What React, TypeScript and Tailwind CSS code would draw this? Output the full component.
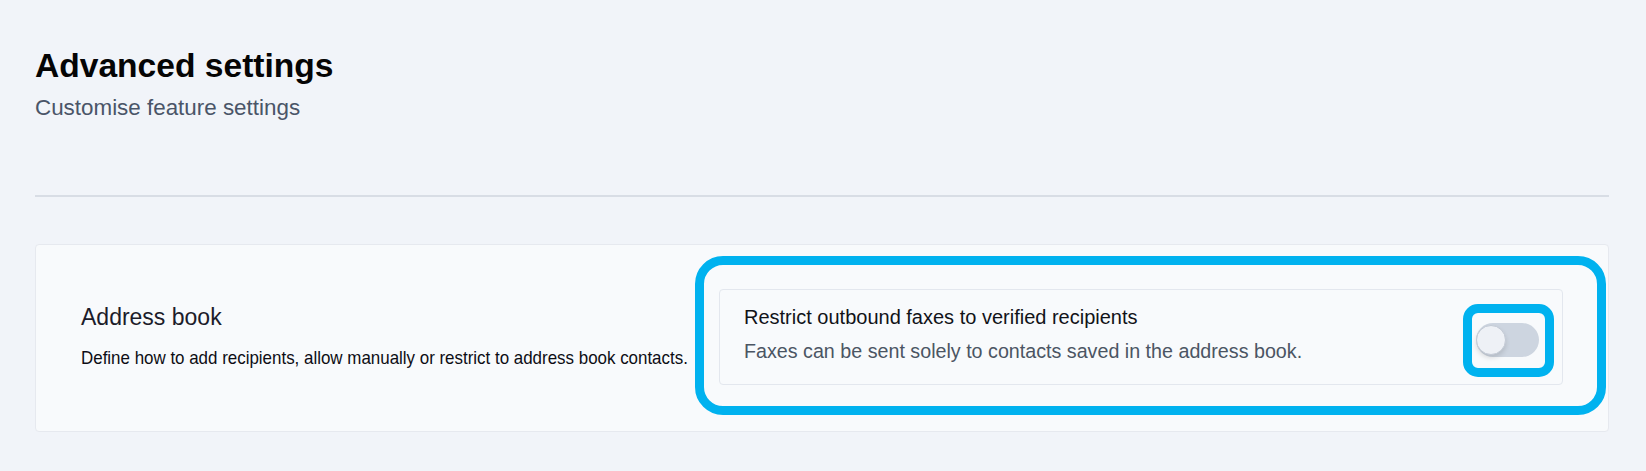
import React from "react";

export default function App() {
  return (
    <div
      className="min-h-[471px] w-full bg-[#f1f4f9] pl-[35px] pr-[37px] pt-[46px]"
      style={{ fontFamily: '"Liberation Sans", Arial, sans-serif' }}
    >
      <h1 className="text-[33.6px] font-bold leading-[40px] text-[#050505]">Advanced settings</h1>
      <p className="mt-[8px] text-[22.4px] leading-[28px] text-[#4a5568]">Customise feature settings</p>

      <div className="mt-[73px] h-[2px] w-full bg-[#d8dde5]" />

      <div className="mt-[47px] flex h-[188px] items-start justify-between rounded-[4px] border border-[#e6e9ef] bg-[#f8fafc] pr-[2px]">
        <div className="mt-[59px] min-w-0 flex-1 pl-[45px]">
          <div className="text-[23px] leading-[26px] text-[#1c1c2a]">Address book</div>
          <div className="mt-[17px] origin-left scale-x-[0.915] whitespace-nowrap text-[18.5px] leading-[22px] text-[#0d0d14]">
            Define how to add recipients, allow manually or restrict to address book contacts.
          </div>
        </div>

        <div className="mt-[11px] w-[911px] shrink-0 rounded-[28px] border-[9px] border-[#00b2ef] pb-[21px] pl-[15px] pr-[34px] pt-[24px]">
          <div className="flex h-[96px] items-start justify-between rounded-[4px] border border-[#e3e7ee] bg-[#f8fafc] pl-[24px] pr-[8px]">
            <div className="mt-[13px]">
              <div className="text-[20px] leading-[28px] text-[#111318]">
                Restrict outbound faxes to verified recipients
              </div>
              <div className="mt-[6px] text-[19.7px] leading-[28px] text-[#4b5563]">
                Faxes can be sent solely to contacts saved in the address book.
              </div>
            </div>

            <div className="mt-[14px] rounded-[15px] border-[9px] border-[#00b2ef] bg-[#f8fafc] pb-[11px] pl-[4px] pr-[6px] pt-[10px]">
              <div className="relative h-[34px] w-[63px] rounded-full bg-[#cdd5e0]">
                <div className="absolute left-0 top-[2px] h-[30px] w-[30px] rounded-full border border-[#c3cad5] bg-[#eef1f6] shadow-[0_3px_5px_rgba(0,0,0,0.12)]" />
              </div>
            </div>
          </div>
        </div>
      </div>
    </div>
  );
}
